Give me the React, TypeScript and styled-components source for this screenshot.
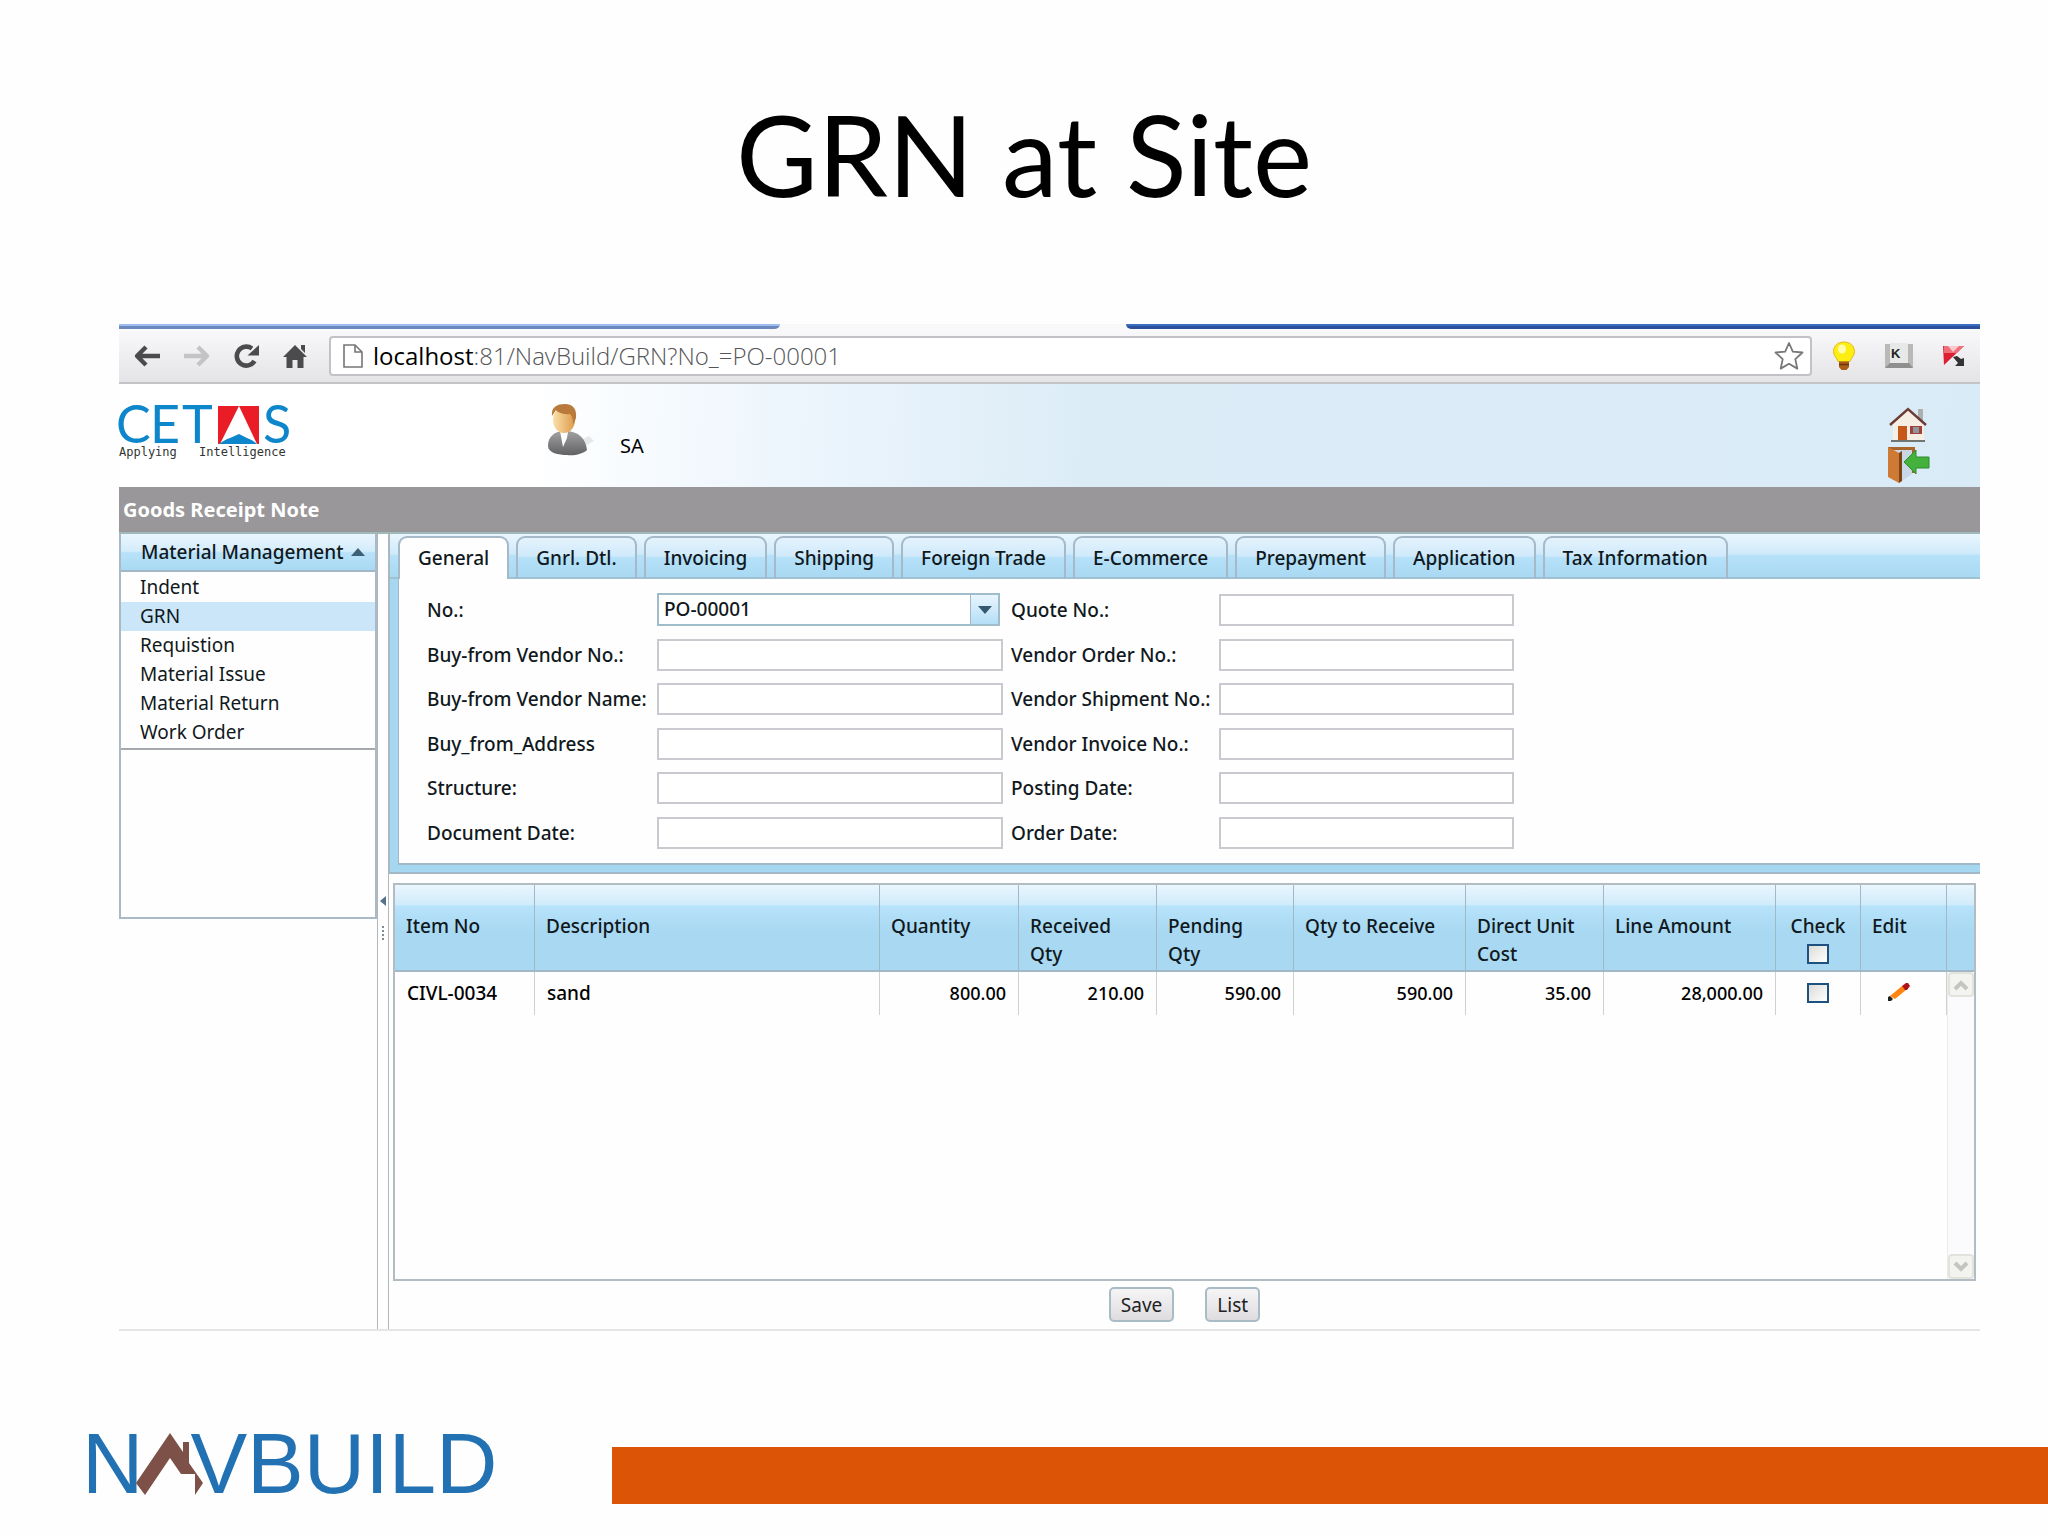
import React, { useState } from "react";
import styled, { createGlobalStyle, css } from "styled-components";

const ui = `"Noto Sans", "Open Sans", sans-serif`;
const line = "#a3b8c6";
const glossy = "linear-gradient(#eaf6fe 0%, #cfeafa 44%, #b6e1f9 48%, #a8d8f2 100%)";
const glossyHead = "linear-gradient(#eaf6fe 0%, #d0ebfa 23%, #b7e3fb 25%, #a8d8f2 55%, #a8d8f2 100%)";

const GlobalStyle = createGlobalStyle`
  * { box-sizing: border-box; }
  body { margin: 0; background: #fefefe; color: #101820; font-family: ${ui}; }
  button, input, select { font: inherit; color: inherit; }
`;

const Slide = styled.div`
  display: flex;
  flex-direction: column;
  min-height: 100vh;
`;

const Title = styled.h1`
  margin: 0;
  padding: 84px 0 100px;
  font-family: Lato, "Open Sans", sans-serif;
  font-size: 112px;
  font-weight: 400;
  line-height: 140px;
  color: #000;
  text-align: center;
`;

const Shot = styled.main`
  margin: 0 68px 0 119px;
  border-bottom: 2px solid #e3e5e7;
`;

/* Browser chrome */
const TabEdge = styled.div`
  display: grid;
  grid-template-columns: 661fr 346fr 854fr;
  height: 5px;
  background: #f8f8f9;
`;
const TabEdgePart = styled.span<{ $tone: "inactive" | "active" | "frame" }>`
  border-bottom-right-radius: ${(p) => (p.$tone === "inactive" ? "5px" : "0")};
  border-bottom-left-radius: ${(p) => (p.$tone === "frame" ? "5px" : "0")};
  background: ${(p) =>
    p.$tone === "inactive"
      ? "linear-gradient(#9dbdf0 50%, #6c88bf 50%)"
      : p.$tone === "active"
      ? "#f8f8f9"
      : "linear-gradient(#3a6fc0 50%, #2c519c 50%)"};
`;
const Toolbar = styled.div`
  display: flex;
  align-items: center;
  gap: 20px;
  height: 55px;
  padding: 0 14px;
  background: linear-gradient(#f9f8fa, #e4e3e5);
  border-bottom: 2px solid #c2c4c8;
`;
const ToolButton = styled.button`
  display: flex;
  padding: 0;
  border: 0;
  background: none;
`;
const NavButtons = styled.div`
  display: flex;
  gap: 22px;
`;
const Extensions = styled.div`
  display: flex;
  align-items: center;
  gap: 29px;
`;
const Omnibox = styled.div`
  display: flex;
  flex: 1;
  align-items: center;
  gap: 10px;
  height: 40px;
  padding: 0 6px 0 12px;
  background: #fff;
  border: 2px solid #c3c1c5;
  border-radius: 4px;
`;
const Url = styled.div`
  flex: 1;
  font-family: "Open Sans", sans-serif;
  font-size: 24px;
  font-weight: 300;
  line-height: 28px;
  color: #55565a;
`;
const Host = styled.span`
  font-weight: 400;
  color: #000;
`;

/* Application header */
const Banner = styled.header`
  display: flex;
  align-items: flex-start;
  height: 103px;
  padding: 14px 50px 0 0;
  background: linear-gradient(92deg, #fff 22%, #eef6fd 35%, #dcecf7 52%, #daebf8 100%);
`;
const Account = styled.div`
  display: flex;
  flex: 1;
  align-items: flex-start;
  gap: 24px;
  margin-left: 255px;
  padding-top: 4px;
`;
const UserName = styled.span`
  padding-top: 30px;
  font-size: 20px;
  line-height: 28px;
  color: #000;
`;
const Shortcuts = styled.nav`
  display: flex;
  flex-direction: column;
  gap: 2px;
  padding-top: 8px;
`;
const IconLink = styled.a`
  display: flex;
`;
const PageBar = styled.h2`
  height: 47px;
  margin: 0;
  padding: 0 4px;
  font-size: 20px;
  line-height: 45px;
  font-weight: 700;
  color: #fff;
  background: #999799;
  border-bottom: 2px solid #9fb9bb;
`;

/* Body layout */
const Workspace = styled.div`
  display: flex;
`;
const Sidebar = styled.aside`
  width: 258px;
  height: 385px;
  border: 2px solid #a9bac6;
  border-top: 0;
`;
const SideHead = styled.button`
  display: flex;
  align-items: center;
  justify-content: space-between;
  width: 100%;
  height: 38px;
  padding: 0 10px 0 20px;
  border: 0;
  border-bottom: 2px solid ${line};
  font-size: 19px;
  font-weight: 500;
  background: linear-gradient(#eaf6fe 0%, #d3ecfb 48%, #b9e2f9 52%, #a8d9f3 100%);
`;
const SideList = styled.ul`
  margin: 0;
  padding: 1px 0;
  list-style: none;
  border-bottom: 2px solid #a5a8ac;
`;
const SideLink = styled.a<{ $current?: boolean }>`
  display: block;
  padding-left: 19px;
  font-size: 19px;
  line-height: 29px;
  color: #101820;
  text-decoration: none;
  background: ${(p) => (p.$current ? "#cae6f8" : "transparent")};
`;
const Splitter = styled.div`
  display: flex;
  flex-direction: column;
  align-items: center;
  gap: 20px;
  width: 12px;
  padding-top: 362px;
  border: solid #b3b7bc;
  border-width: 0 1px;
`;
const Main = styled.div`
  flex: 1;
  min-width: 0;
`;

/* Tabs */
const TabFrame = styled.section`
  padding-left: 8px;
  background: #a5d7f1;
  border-left: 1px solid ${line};
  border-bottom: 2px solid ${line};
`;
const TabStrip = styled.div`
  display: flex;
  gap: 7px;
  height: 45px;
  padding-top: 2px;
  margin-left: -8px;
  padding-left: 8px;
  background: ${glossy};
  box-shadow: inset 0 -2px #9fc1d3;
`;
const Tab = styled.button<{ $active?: boolean }>`
  height: 43px;
  padding: 0 18px 2px;
  border: 2px solid #a5b9c8;
  border-bottom: 0;
  border-radius: 9px 9px 0 0;
  font-size: 19px;
  font-weight: 500;
  white-space: nowrap;
  background: linear-gradient(#e4f3fd 0%, #d0eafb 44%, #b5e1f9 48%, #a8d8f2 100%);
  box-shadow: inset 0 -2px #9fc1d3;
  ${(p) =>
    p.$active &&
    css`
      background: #fefefe;
      box-shadow: none;
    `}
`;
const TabBody = styled.div`
  padding: 14px 28px;
  background: #fefefe;
  border-left: 1px solid ${line};
  border-bottom: 2px solid ${line};
  margin-bottom: 7px;
`;
const Form = styled.form`
  display: grid;
  grid-template-columns: 230px 346px 216px 295px;
  align-content: space-between;
  align-items: center;
  height: 256px;
`;
const Label = styled.label<{ $second?: boolean }>`
  padding-left: ${(p) => (p.$second ? "8px" : "0")};
  font-size: 19px;
  font-weight: 500;
  line-height: 28px;
  white-space: nowrap;
`;
const TextBox = styled.input`
  width: 100%;
  height: 32px;
  padding: 0 6px;
  background: #fff;
  border: 2px solid #cbc8cf;
  font-size: 19px;
`;
const Combo = styled.div`
  position: relative;
  margin-right: 3px;
`;
const ComboSelect = styled.select`
  display: block;
  width: 100%;
  height: 33px;
  padding: 0 36px 2px 5px;
  appearance: none;
  font-size: 19px;
  font-weight: 500;
  border: 2px solid #9fbccb;
  border-radius: 0;
  background: #fff;
`;
const ComboArrow = styled.span`
  position: absolute;
  top: 2px;
  right: 2px;
  bottom: 2px;
  display: flex;
  align-items: center;
  justify-content: center;
  width: 28px;
  pointer-events: none;
  border-left: 1px solid ${line};
  background: linear-gradient(#e9f5fd, #b4def7);
`;

/* Item grid */
const Grid = styled.section`
  display: flex;
  height: 398px;
  margin: 9px 4px 0;
  border: 2px solid #b2bcc3;
`;
const TableArea = styled.div`
  flex: 1;
  min-width: 0;
`;
const Table = styled.table`
  width: 100%;
  table-layout: fixed;
  border-collapse: separate;
  border-spacing: 0;
  font-size: 19px;
`;
const Col = styled.col<{ $w?: number }>`
  width: ${(p) => (p.$w ? `${p.$w}px` : "auto")};
`;
const HeadCell = styled.th<{ $center?: boolean }>`
  height: 87px;
  padding: ${(p) => (p.$center ? "27px 8px 0" : "27px 16px 0 11px")};
  vertical-align: top;
  text-align: ${(p) => (p.$center ? "center" : "left")};
  font-weight: 500;
  line-height: 28px;
  border-right: 1px solid ${line};
  border-bottom: 2px solid ${line};
  background: ${glossyHead};
`;
const Cell = styled.td<{ $num?: boolean; $center?: boolean }>`
  height: 43px;
  padding: 0 12px 2px;
  text-align: ${(p) => (p.$num ? "right" : p.$center ? "center" : "left")};
  font-size: ${(p) => (p.$num ? "18px" : "19px")};
  font-weight: 500;
  border-right: 1px solid #cfd0d2;
  color: #000;
`;
const Tick = styled.input`
  display: block;
  appearance: none;
  width: 22px;
  height: 20px;
  margin: 0 auto;
  border: 2px solid #1c5180;
  background: linear-gradient(135deg, #dcdcd7, #fff);
`;
const CheckAll = styled.div`
  padding-top: 4px;
`;
const EditButton = styled.button`
  display: block;
  margin: 4px 0 0 14px;
  padding: 0;
  border: 0;
  background: none;
`;
const Rail = styled.div`
  display: flex;
  flex-direction: column;
  width: 27px;
`;
const RailHead = styled.div`
  height: 87px;
  border-bottom: 2px solid ${line};
  background: ${glossyHead};
`;
const Track = styled.div`
  display: flex;
  flex: 1;
  flex-direction: column;
  justify-content: space-between;
  border-left: 1px solid #ececee;
  background: #fbfafd;
`;
const TrackButton = styled.button`
  display: flex;
  align-items: center;
  justify-content: center;
  height: 25px;
  padding: 0;
  border: 2px solid #e3e3dd;
  border-radius: 4px;
  background: #f3f3ef;
`;
const Actions = styled.div`
  display: flex;
  justify-content: center;
  gap: 31px;
  padding: 6px 0 7px;
`;
const ActionButton = styled.button`
  height: 35px;
  padding: 0 10px;
  font-size: 19px;
  color: #222;
  border: 2px solid #a9bcc6;
  border-radius: 5px;
  background: linear-gradient(#f6f5f6, #dedcdf);
`;

/* Slide footer */
const Footer = styled.footer`
  display: flex;
  align-items: flex-start;
  gap: 115px;
  padding: 96px 0 30px 82px;
`;
const Brand = styled.div`
  display: flex;
  align-items: center;
  font-family: "Liberation Sans", Arial, sans-serif;
  font-size: 85px;
  line-height: 73px;
  color: #2171b3;
`;
const Roof = styled.svg`
  display: block;
  flex: none;
  margin: 0 -14px 0 -7px;
`;
const Stripe = styled.div`
  flex: 1;
  height: 57px;
  margin-top: 20px;
  background: #dc5507;
`;

function BackIcon({ color, flip }: { color: string; flip?: boolean }) {
  return (
    <svg width="28" height="24" viewBox="0 0 28 24" fill="none" stroke={color} strokeWidth="4.4">
      {flip ? <path d="M1 12H24M15 3l9 9-9 9" strokeLinejoin="round" /> : <path d="M27 12H4M13 3l-9 9 9 9" strokeLinejoin="round" />}
    </svg>
  );
}
function ReloadIcon() {
  return (
    <svg width="28" height="24" viewBox="0 0 28 24">
      <path d="M21.500 17A9.500 9.500 0 1 1 19 4.500" fill="none" stroke="#4b4b4d" strokeWidth="4.6" />
      <path d="M26 1v10.500H14.500z" fill="#4b4b4d" />
    </svg>
  );
}
function HomeIcon() {
  return (
    <svg width="26" height="24" viewBox="0 0 26 24" fill="#4b4b4d">
      <path d="M12 1 24 13h-3.500v11h-6v-8h-5v8h-6V13H0z" />
      <path d="M18 1h4v8l-4-4z" />
    </svg>
  );
}
function PageIcon() {
  return (
    <svg width="20" height="24" viewBox="0 0 20 24" fill="#fff" stroke="#77777a" strokeWidth="1.6">
      <path d="M1 1h11l7 7v15H1zM12 1v7h7" />
    </svg>
  );
}
function StarIcon() {
  return (
    <svg width="30" height="30" viewBox="0 0 30 30" fill="#fff" stroke="#77777a" strokeWidth="1.8" strokeLinejoin="round">
      <path d="M15 2l3.800 8.600 9.700.9-7.200 6.600 2 9.500L15 22.800l-8.300 4.800 2-9.500L1.500 11.500l9.700-.9z" />
    </svg>
  );
}
function BulbIcon() {
  return (
    <svg width="24" height="30" viewBox="0 0 24 30">
      <path d="M12 1C5.500 1 1.500 5.500 1.500 10.500c0 4 3 6 4.700 10h11.600c1.700-4 4.700-6 4.700-10C22.500 5.500 18.500 1 12 1z" fill="#fdee12" stroke="#e9b616" />
      <ellipse cx="10" cy="8" rx="4" ry="4.500" fill="#fffcae" />
      <path d="M7 20.500h10V26l-2.500 3h-5L7 26z" fill="#a85c16" />
      <path d="M7 23.500h10" stroke="#6e3607" strokeWidth="1.5" />
    </svg>
  );
}
function KeyIcon() {
  return (
    <svg width="28" height="26" viewBox="0 0 28 26">
      <path d="M0 1h28v24H0z" fill="#b9b9b8" />
      <path d="M0 25l5-5h19l4 5z" fill="#8f8f8f" />
      <path d="M5 0h18v20H5z" fill="#e6e9e8" />
      <text x="6" y="15" fontFamily="Liberation Sans, Arial, sans-serif" fontSize="13" fontWeight="700" fill="#222">K</text>
    </svg>
  );
}
function ShieldIcon() {
  return (
    <svg width="24" height="22" viewBox="0 0 24 22">
      <path d="M1 1h21L2 20z" fill="#dd1f33" />
      <path d="M2 1h20l-7 7H2z" fill="#ee6f7a" />
      <path d="M6 1l5 6 6-6z" fill="#f9c9cc" />
      <path d="M11 12l4-1 4 3 3-1v8h-9l3-3z" fill="#333" />
    </svg>
  );
}
const CetasSvg = styled.svg`
  display: block;
  overflow: visible;
`;
function CetasLogo() {
  const letter = { fontFamily: "Lato, sans-serif", fontSize: 52, fill: "#0d86cb" };
  return (
    <CetasSvg width="174" height="62" viewBox="0 0 174 62" role="img" aria-label="CETAS Applying Intelligence">
      <text x="-3" y="45" {...letter}>C</text>
      <text x="31" y="45" {...letter}>E</text>
      <text x="63" y="45" {...letter}>T</text>
      <path d="M99 8h41v38H99z" fill="#ea1c26" />
      <path d="M120 8l18 38h-37z" fill="#fff" />
      <path d="M100 46q7-5 11-6l9-4 8 4q6 2 10 6z" fill="#0d86cb" />
      <text x="144" y="45" {...letter}>S</text>
      <g fontFamily="DejaVu Sans Mono, monospace" fontSize="12" fill="#333">
        <text x="0" y="58">Applying</text>
        <text x="80" y="58">Intelligence</text>
      </g>
    </CetasSvg>
  );
}
function PersonIcon() {
  return (
    <svg width="48" height="54" viewBox="0 0 48 54">
      <defs>
        <linearGradient id="suit" x1="0" x2="0" y1="0" y2="1">
          <stop offset="0" stopColor="#a2a2a3" />
          <stop offset="1" stopColor="#616163" />
        </linearGradient>
        <linearGradient id="face" x1="0" x2="1" y1="0" y2="0">
          <stop offset="0" stopColor="#fbe0a8" />
          <stop offset="1" stopColor="#dd9a4c" />
        </linearGradient>
      </defs>
      <path d="M30 48l16-9-5-5-12 6z" fill="#e6e9ea" />
      <path d="M0 44c0-9 6-15 17-15 14 0 21 8 22 19-4 4-13 6-20 5-8 0-19-2-19-9z" fill="url(#suit)" />
      <path d="M12 29l8 1-1 6-4 9z" fill="#fff" />
      <ellipse cx="16" cy="18" rx="11" ry="13" fill="url(#face)" />
      <path d="M4 14C3 5 9 2 17 2c8 0 12 5 11 14-1 3-2 5-3 6 0-5-1-8-3-10C15 13 9 10 8 8z" fill="#b97a3b" />
    </svg>
  );
}
function CottageIcon() {
  return (
    <svg width="42" height="38" viewBox="0 0 42 38">
      <path d="M30 3h5v12h-5z" fill="#aeb0ae" />
      <path d="M5 16L20 4l16 13v18H5z" fill="#f6eee3" />
      <path d="M2 19L20 3l18 16" fill="none" stroke="#6d3b35" strokeWidth="2.4" />
      <path d="M10 20h9v14h-9z" fill="#c6591a" />
      <path d="M22 20h12v8H22z" fill="#a14038" />
      <path d="M25 21h6v6h-6z" fill="#8e989c" />
      <path d="M3 34h34v2H3z" fill="#70756f" />
    </svg>
  );
}
function ExitIcon() {
  return (
    <svg width="42" height="38" viewBox="0 0 42 38">
      <path d="M0 1h27v4H0zM24 5h3v22h-3z" fill="#a9652a" />
      <path d="M3 4h21v24L11 37 3 29z" fill="#c9d6e4" />
      <path d="M0 1l11 6v30L0 31z" fill="#cf7a34" />
      <path d="M11 7l3-2v30l-3 2z" fill="#7c4415" />
      <path d="M16 16L28 4v7h13v11H28v6z" fill="#44b13c" stroke="#2f8a2a" />
    </svg>
  );
}
function PencilIcon() {
  return (
    <svg width="24" height="20" viewBox="0 0 24 20">
      <path d="M3 14L15 4l4 4L8 17z" fill="#ff8410" />
      <path d="M15 4l4-3h2l2 3-3 4h-2z" fill="#b11218" />
      <path d="M1 19v-4l2-1 3 3-2 2z" fill="#222" />
    </svg>
  );
}
function Chevron({ down }: { down?: boolean }) {
  return (
    <svg width="16" height="12" viewBox="0 0 16 12" fill="none" stroke="#c4c4c0" strokeWidth="4">
      <path d={down ? "M2 2l6 6 6-6" : "M2 10l6-6 6 6"} />
    </svg>
  );
}

const tabs = ["General", "Gnrl. Dtl.", "Invoicing", "Shipping", "Foreign Trade", "E-Commerce", "Prepayment", "Application", "Tax Information"];
const menu = ["Indent", "GRN", "Requistion", "Material Issue", "Material Return", "Work Order"];
const fields: [string, string][] = [
  ["Buy-from Vendor No.:", "Vendor Order No.:"],
  ["Buy-from Vendor Name:", "Vendor Shipment No.:"],
  ["Buy_from_Address", "Vendor Invoice No.:"],
  ["Structure:", "Posting Date:"],
  ["Document Date:", "Order Date:"],
];
const columns: { name: string; width?: number }[] = [
  { name: "Item No", width: 140 },
  { name: "Description" },
  { name: "Quantity", width: 139 },
  { name: "Received Qty", width: 138 },
  { name: "Pending Qty", width: 137 },
  { name: "Qty to Receive", width: 172 },
  { name: "Direct Unit Cost", width: 138 },
  { name: "Line Amount", width: 172 },
  { name: "Check", width: 85 },
  { name: "Edit", width: 86 },
];
const amounts = ["800.00", "210.00", "590.00", "590.00", "35.00", "28,000.00"];

export default function App() {
  const [tab, setTab] = useState(0);
  return (
    <Slide>
      <GlobalStyle />
      <Title>GRN at Site</Title>
      <Shot>
        <TabEdge>
          <TabEdgePart $tone="inactive" />
          <TabEdgePart $tone="active" />
          <TabEdgePart $tone="frame" />
        </TabEdge>
        <Toolbar>
          <NavButtons>
            <ToolButton aria-label="Back"><BackIcon color="#4b4b4d" /></ToolButton>
            <ToolButton aria-label="Forward"><BackIcon color="#c4c4c6" flip /></ToolButton>
            <ToolButton aria-label="Reload"><ReloadIcon /></ToolButton>
            <ToolButton aria-label="Home"><HomeIcon /></ToolButton>
          </NavButtons>
          <Omnibox>
            <PageIcon />
            <Url><Host>localhost</Host>:81/NavBuild/GRN?No_=PO-00001</Url>
            <ToolButton aria-label="Bookmark"><StarIcon /></ToolButton>
          </Omnibox>
          <Extensions>
            <ToolButton aria-label="Tips"><BulbIcon /></ToolButton>
            <ToolButton aria-label="Keyboard"><KeyIcon /></ToolButton>
            <ToolButton aria-label="Protection"><ShieldIcon /></ToolButton>
          </Extensions>
        </Toolbar>
        <Banner>
          <CetasLogo />
          <Account>
            <PersonIcon />
            <UserName>SA</UserName>
          </Account>
          <Shortcuts>
            <IconLink href="#home" aria-label="Home"><CottageIcon /></IconLink>
            <IconLink href="#logout" aria-label="Log out"><ExitIcon /></IconLink>
          </Shortcuts>
        </Banner>
        <PageBar>Goods Receipt Note</PageBar>
        <Workspace>
          <Sidebar>
            <SideHead>
              Material Management
              <svg width="14" height="8" viewBox="0 0 14 8"><path d="M7 0l7 8H0z" fill="#3c6078" /></svg>
            </SideHead>
            <SideList>
              {menu.map((m) => (
                <li key={m}><SideLink href={"#" + m.replace(" ", "-")} $current={m === "GRN"}>{m}</SideLink></li>
              ))}
            </SideList>
          </Sidebar>
          <Splitter>
            <svg width="6" height="10" viewBox="0 0 6 10"><path d="M6 0v10L0 5z" fill="#54738a" /></svg>
            <svg width="2" height="16" viewBox="0 0 2 16"><path d="M1 0v16" stroke="#7c8d99" strokeWidth="2" strokeDasharray="2 2" /></svg>
          </Splitter>
          <Main>
            <TabFrame>
              <TabStrip role="tablist">
                {tabs.map((t, i) => (
                  <Tab key={t} role="tab" aria-selected={i === tab} $active={i === tab} onClick={() => setTab(i)}>{t}</Tab>
                ))}
              </TabStrip>
              <TabBody>
                <Form>
                  <Label htmlFor="po">No.:</Label>
                  <Combo>
                    <ComboSelect id="po"><option>PO-00001</option></ComboSelect>
                    <ComboArrow>
                      <svg width="14" height="8" viewBox="0 0 14 8"><path d="M0 0h14L7 8z" fill="#33586f" /></svg>
                    </ComboArrow>
                  </Combo>
                  <Label htmlFor="quote" $second>Quote No.:</Label>
                  <TextBox id="quote" />
                  {fields.map(([a, b], i) => (
                    <React.Fragment key={a}>
                      <Label htmlFor={"a" + i}>{a}</Label>
                      <TextBox id={"a" + i} />
                      <Label htmlFor={"b" + i} $second>{b}</Label>
                      <TextBox id={"b" + i} />
                    </React.Fragment>
                  ))}
                </Form>
              </TabBody>
            </TabFrame>
            <Grid>
              <TableArea>
                <Table>
                  <colgroup>
                    {columns.map((c) => <Col key={c.name} $w={c.width} />)}
                  </colgroup>
                  <thead>
                    <tr>
                      {columns.map((c) => (
                        <HeadCell key={c.name} $center={c.name === "Check"}>
                          {c.name}
                          {c.name === "Check" && <CheckAll><Tick type="checkbox" aria-label="Check all" /></CheckAll>}
                        </HeadCell>
                      ))}
                    </tr>
                  </thead>
                  <tbody>
                    <tr>
                      <Cell>CIVL-0034</Cell>
                      <Cell>sand</Cell>
                      {amounts.map((a, i) => <Cell key={i} $num>{a}</Cell>)}
                      <Cell $center><Tick type="checkbox" aria-label="Check CIVL-0034" /></Cell>
                      <Cell><EditButton aria-label="Edit CIVL-0034"><PencilIcon /></EditButton></Cell>
                    </tr>
                  </tbody>
                </Table>
              </TableArea>
              <Rail>
                <RailHead />
                <Track>
                  <TrackButton aria-label="Scroll up"><Chevron /></TrackButton>
                  <TrackButton aria-label="Scroll down"><Chevron down /></TrackButton>
                </Track>
              </Rail>
            </Grid>
            <Actions>
              <ActionButton>Save</ActionButton>
              <ActionButton>List</ActionButton>
            </Actions>
          </Main>
        </Workspace>
      </Shot>
      <Footer>
        <Brand>
          N
          <Roof width="68" height="62" viewBox="0 0 68 62" role="img" aria-label="A">
            <path d="M34 0l13 19V9h6v21l14 20-8 12V41H45L34 25 9 62 0 50z" fill="#7d5148" />
          </Roof>
          VBUILD
        </Brand>
        <Stripe />
      </Footer>
    </Slide>
  );
}
